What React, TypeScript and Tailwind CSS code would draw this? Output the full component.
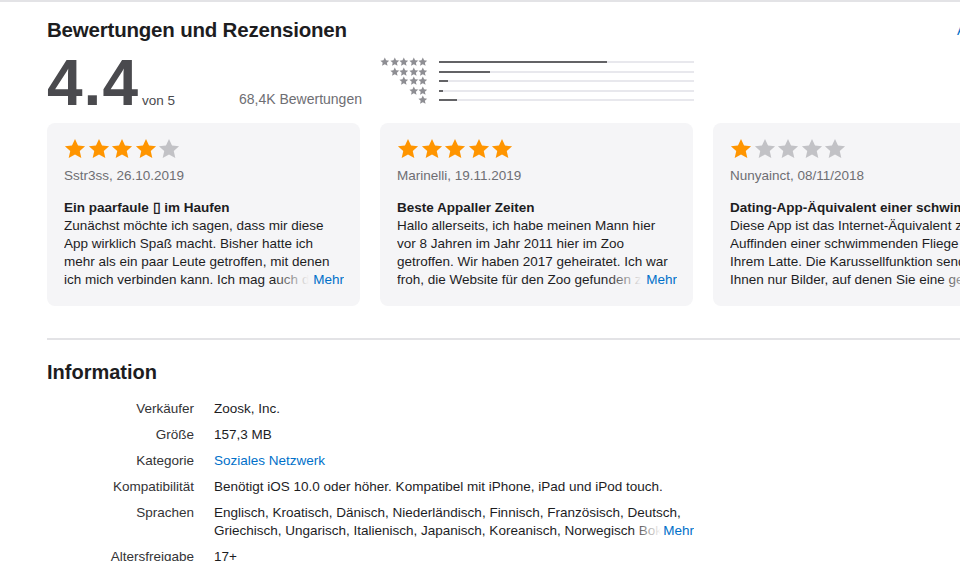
import React from "react";

const font = { fontFamily: '"Liberation Sans", Arial, sans-serif' };

const Star = ({ className }: { className: string }) => (
  <svg viewBox="0 0 24 24" className={className} fill="currentColor">
    <path d="M12 1.2l3.3 7.1 7.7.8-5.8 5.2 1.7 7.6L12 17.9l-6.9 4 1.7-7.6L1 9.1l7.7-.8z" />
  </svg>
);

const histogram = [
  { stars: 5, pct: 66 },
  { stars: 4, pct: 20 },
  { stars: 3, pct: 3.5 },
  { stars: 2, pct: 1.5 },
  { stars: 1, pct: 7 },
];

const reviews = [
  {
    rating: 4,
    author: "Sstr3ss, 26.10.2019",
    title: "Ein paarfaule \u25AF im Haufen",
    body: "Zunächst möchte ich sagen, dass mir diese App wirklich Spaß macht. Bisher hatte ich mehr als ein paar Leute getroffen, mit denen ich mich verbinden kann. Ich mag auch die Funktion",
  },
  {
    rating: 5,
    author: "Marinelli, 19.11.2019",
    title: "Beste Appaller Zeiten",
    body: "Hallo allerseits, ich habe meinen Mann hier vor 8 Jahren im Jahr 2011 hier im Zoo getroffen. Wir haben 2017 geheiratet. Ich war froh, die Website für den Zoo gefunden zu haben",
  },
  {
    rating: 1,
    author: "Nunyainct, 08/11/2018",
    title: "Dating-App-Äquivalent einer schwimmenden Fliege",
    body: "Diese App ist das Internet-Äquivalent zum Auffinden einer schwimmenden Fliege in Ihrem Latte. Die Karussellfunktion sendet Ihnen nur Bilder, auf denen Sie eine geringe",
  },
];

const info = [
  { label: "Verkäufer", value: "Zoosk, Inc." },
  { label: "Größe", value: "157,3 MB" },
  { label: "Kategorie", value: "Soziales Netzwerk", link: true },
  {
    label: "Kompatibilität",
    value: "Benötigt iOS 10.0 oder höher. Kompatibel mit iPhone, iPad und iPod touch.",
  },
];

const App = () => {
  return (
    <div className="w-[960px] h-[561px] overflow-hidden bg-white border-t-2 border-[#e3e3e6] text-[#1d1d1f]" style={font}>
      <div className="pl-[47px]">
        {/* Ratings header */}
        <div className="flex items-end pt-[16px]">
          <h2 className="text-[20.5px] font-bold leading-[24px] tracking-[-0.2px]">Bewertungen und Rezensionen</h2>
          <a className="ml-auto w-[3px] whitespace-nowrap text-[14px] leading-[24px] text-[#0070c9]">Alle anzeigen</a>
        </div>

        {/* Summary */}
        <div className="flex items-start mt-[17px] h-[48px]">
          <div className="flex items-end w-[192px]">
            <span className="text-[64px] font-bold leading-[49px] text-[#4a4a4e] tracking-[1px]">4.4</span>
            <span className="ml-[3px] text-[13.5px] leading-[14px] text-[#4a4a4e]">von 5</span>
          </div>
          <div className="self-end text-[14px] leading-[14px] text-[#6e6e73] w-[141px] pb-[1px]">68,4K Bewertungen</div>
          <div className="flex flex-col gap-[1.5px] -mt-[1px]">
            {histogram.map((h) => (
              <div key={h.stars} className="flex items-center h-[8px]">
                <div className="flex justify-end w-[48px] text-[#8e8e93]">
                  {Array.from({ length: h.stars }).map((_, i) => (
                    <Star key={i} className="w-[9.6px] h-[9.6px]" />
                  ))}
                </div>
                <div className="ml-[11px] w-[255px] h-[2px] bg-[#e8e8ed]">
                  <div className="h-full bg-[#636366]" style={{ width: `${h.pct}%` }} />
                </div>
              </div>
            ))}
          </div>
        </div>

        {/* Review cards */}
        <div className="flex gap-[20px] mt-[16px]">
          {reviews.map((r) => (
            <div key={r.author} className="shrink-0 w-[313px] h-[183px] rounded-[8px] bg-[#f5f5f7] pt-[15px] pl-[17px] pr-[16px]">
              <div className="flex gap-[1.5px]">
                {[1, 2, 3, 4, 5].map((n) => (
                  <Star key={n} className={`w-[22px] h-[22px] ${n <= r.rating ? "text-[#ff9500]" : "text-[#c2c2c6]"}`} />
                ))}
              </div>
              <div className="mt-[7px] text-[13.5px] leading-[18px] text-[#6e6e73] whitespace-nowrap">{r.author}</div>
              <div className="mt-[14px] text-[13.5px] font-bold leading-[18px] whitespace-nowrap">{r.title}</div>
              <div className="relative h-[72px] overflow-hidden w-[280px]">
                <p className="text-[13.5px] leading-[18px]">{r.body}</p>
                <div className="absolute right-0 bottom-0 flex h-[18px] items-center">
                  <div className="w-[36px] h-full bg-gradient-to-r from-transparent to-[#f5f5f7]" />
                  <a className="bg-[#f5f5f7] pl-[4px] text-[13.5px] leading-[18px] text-[#0070c9]">Mehr</a>
                </div>
              </div>
            </div>
          ))}
        </div>

        {/* Divider */}
        <div className="mt-[32px] h-[2px] bg-[#e3e3e6]" />

        {/* Information */}
        <h2 className="mt-[20px] text-[20px] font-bold leading-[24px]">Information</h2>
        <div className="mt-[16px] flex flex-col gap-[8px] text-[13.5px] leading-[18px]">
          {info.map((row) => (
            <div key={row.label} className="flex">
              <div className="w-[147px] text-right text-[#333336]">{row.label}</div>
              <div className={`ml-[20px] ${row.link ? "text-[#0070c9]" : ""}`}>{row.value}</div>
            </div>
          ))}
          <div className="flex">
            <div className="w-[147px] text-right text-[#333336]">Sprachen</div>
            <div className="ml-[20px] relative w-[480px] h-[36px] overflow-hidden">
              <p>
                Englisch, Kroatisch, Dänisch, Niederländisch, Finnisch, Französisch, Deutsch, Griechisch, Ungarisch,
                Italienisch, Japanisch, Koreanisch, Norwegisch Bokmål, Polnisch, Portugiesisch, Russisch
              </p>
              <div className="absolute right-0 bottom-0 flex h-[18px] items-center">
                <div className="w-[30px] h-full bg-gradient-to-r from-transparent to-white" />
                <a className="bg-white pl-[2px] text-[#0070c9]">Mehr</a>
              </div>
            </div>
          </div>
          <div className="flex">
            <div className="w-[147px] text-right text-[#333336]">Altersfreigabe</div>
            <div className="ml-[20px]">17+</div>
          </div>
        </div>
      </div>
    </div>
  );
};

export default App;
